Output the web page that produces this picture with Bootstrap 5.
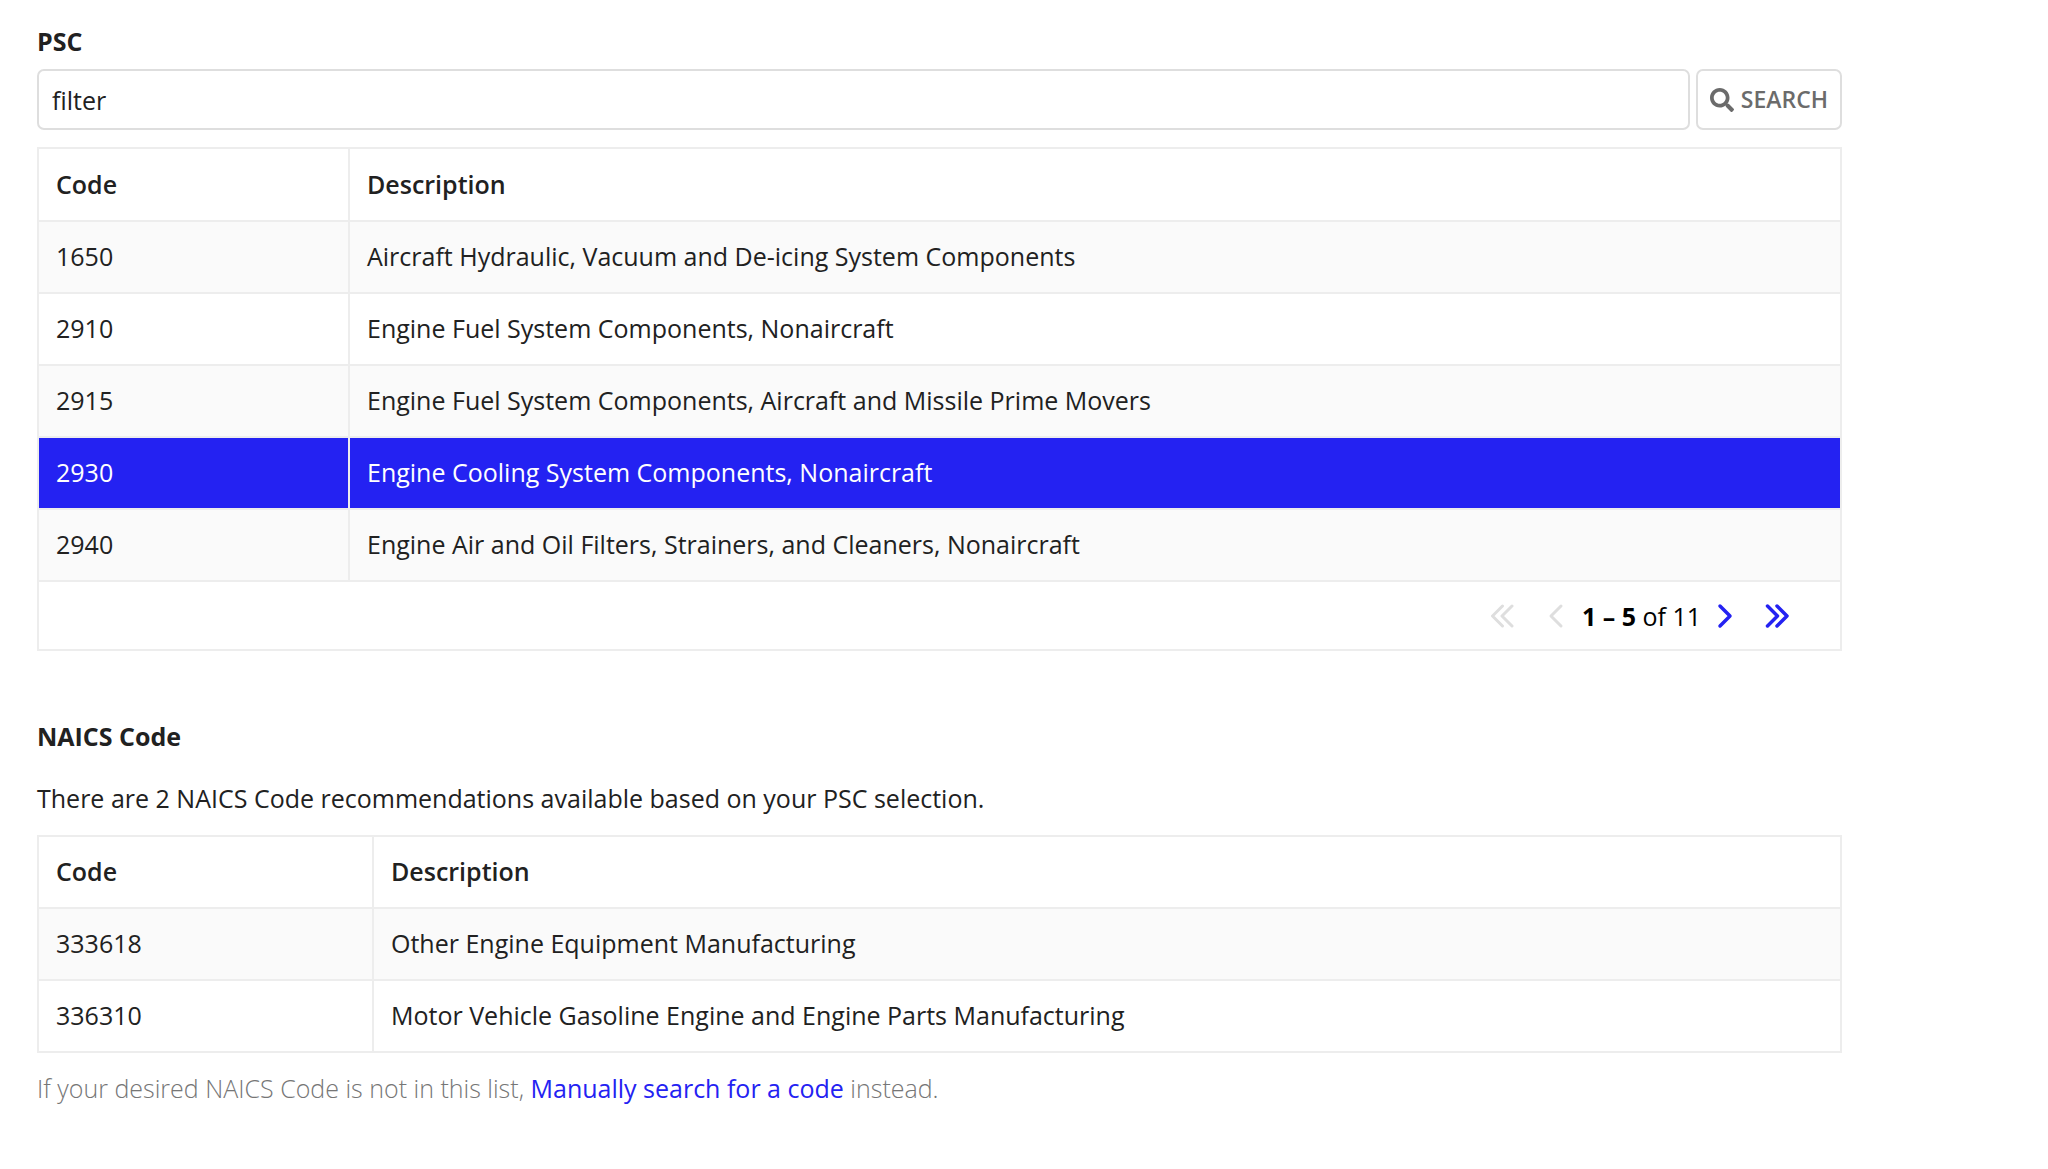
<!DOCTYPE html>
<html lang="en">
<head>
<meta charset="utf-8">
<meta name="viewport" content="width=device-width, initial-scale=1">
<title>PSC and NAICS Code</title>
<link rel="stylesheet" href="https://cdn.jsdelivr.net/npm/bootstrap@5.3.0/dist/css/bootstrap.min.css">
<style>
:root { --ink: #212121; --line: #ededed; --stripe: #fafafa; --accent: #2422f2; }
body { font-family: "Open Sans", sans-serif; font-size: 25px; line-height: 34px; color: var(--ink); background: #fff; }
.page-body { padding: 24px 206px 24px 37px; }
.field-title { font-size: 25px; line-height: 34px; font-weight: 700; }
.search-line { gap: 6px; margin: 11px 0 17px; }
.search-line .form-control { height: 61px; padding: 0 13px; font-size: 25px; color: var(--ink); border: 2px solid #dedede; border-radius: 7px; }
.search-line .btn { height: 61px; padding: 0 12px; gap: 7px; font-size: 23px; font-weight: 600; color: #6b6b6b; background: #fff; border: 2px solid #dedede; border-radius: 7px; }
.code-table { --bs-table-bg: #fff; --bs-table-striped-bg: var(--stripe); --bs-table-color: var(--ink); --bs-table-striped-color: var(--ink); border-collapse: collapse; table-layout: fixed; }
.code-table th, .code-table td { height: 72px; padding: 0 17px 2px; border: 2px solid var(--line); vertical-align: middle; }
.code-table th { font-weight: 600; }
.psc-table th { height: 73px; }
.psc-table .code-col { width: 311px; }
.naics-table .code-col { width: 335px; }
.code-table tr.picked > td { background: var(--accent); color: #fff; box-shadow: none; }
.code-table tfoot td { height: 69px; padding: 0 41px 0 17px; color: #000; }
.pager-btn { padding: 0 10px; border: 0; background: none; color: var(--accent); line-height: 0; }
.pager-btn:disabled { color: #dedede; }
.pager-first { margin-right: 14px; }
.pager-next { margin-right: 12px; }
.pager-range { padding: 0 6px 0 8px; }
.naics-block { margin-top: 68px; }
.naics-note { margin: 22px 0 14px; padding: 6px 0; }
.hint { color: #767676; font-weight: 300; margin-top: 18px; }
.hint a { color: var(--accent); font-weight: 400; text-decoration: none; }
</style>
</head>
<body>
<main class="page-body">
  <form onsubmit="return false">
    <label class="field-title d-block" for="psc">PSC</label>
    <div class="search-line d-flex">
      <input class="form-control flex-grow-1" id="psc" type="text" value="filter">
      <button class="btn d-flex align-items-center flex-shrink-0" type="submit">
        <svg width="24" height="24" viewBox="0 0 512 512" fill="currentColor" aria-hidden="true"><path d="M505 442.700 405.300 343c-4.500-4.500-10.600-7-17-7H372c27.600-35.300 44-79.700 44-128C416 93.100 322.900 0 208 0S0 93.100 0 208s93.100 208 208 208c48.300 0 92.700-16.400 128-44v16.300c0 6.400 2.500 12.500 7 17l99.700 99.700c9.400 9.400 24.600 9.400 33.900 0l28.300-28.300c9.400-9.400 9.400-24.600.1-34zM208 336c-70.700 0-128-57.200-128-128 0-70.700 57.200-128 128-128 70.700 0 128 57.200 128 128 0 70.700-57.200 128-128 128z"/></svg>
        SEARCH
      </button>
    </div>
  </form>

  <table class="table table-striped code-table psc-table mb-0">
    <colgroup><col class="code-col"><col></colgroup>
    <thead><tr><th scope="col">Code</th><th scope="col">Description</th></tr></thead>
    <tbody>
      <tr><td>1650</td><td>Aircraft Hydraulic, Vacuum and De-icing System Components</td></tr>
      <tr><td>2910</td><td>Engine Fuel System Components, Nonaircraft</td></tr>
      <tr><td>2915</td><td>Engine Fuel System Components, Aircraft and Missile Prime Movers</td></tr>
      <tr class="picked" aria-selected="true"><td>2930</td><td>Engine Cooling System Components, Nonaircraft</td></tr>
      <tr><td>2940</td><td>Engine Air and Oil Filters, Strainers, and Cleaners, Nonaircraft</td></tr>
    </tbody>
    <tfoot>
      <tr><td colspan="2">
        <div class="d-flex justify-content-end align-items-center">
          <button class="pager-btn pager-first" type="button" disabled aria-label="First page"><svg width="24" height="26" viewBox="0 0 24 26" fill="none" stroke="currentColor" stroke-width="3" stroke-linecap="round" stroke-linejoin="round"><path d="M12.500 3 2.500 13l10 10M22 3 12 13l10 10"/></svg></button>
          <button class="pager-btn" type="button" disabled aria-label="Previous page"><svg width="16" height="26" viewBox="0 0 16 26" fill="none" stroke="currentColor" stroke-width="3" stroke-linecap="round" stroke-linejoin="round"><path d="M13 3 3 13l10 10"/></svg></button>
          <span class="pager-range"><b>1 – 5</b> of 11</span>
          <button class="pager-btn pager-next" type="button" aria-label="Next page"><svg width="16" height="26" viewBox="0 0 16 26" fill="none" stroke="currentColor" stroke-width="3.500" stroke-linecap="round" stroke-linejoin="round"><path d="m3 3 10 10L3 23"/></svg></button>
          <button class="pager-btn" type="button" aria-label="Last page"><svg width="24" height="26" viewBox="0 0 24 26" fill="none" stroke="currentColor" stroke-width="3.500" stroke-linecap="round" stroke-linejoin="round"><path d="m2.500 3 10 10-10 10M12 3l10 10-10 10"/></svg></button>
        </div>
      </td></tr>
    </tfoot>
  </table>

  <section class="naics-block">
    <h2 class="field-title mb-0">NAICS Code</h2>
    <p class="naics-note">There are 2 NAICS Code recommendations available based on your PSC selection.</p>
    <table class="table table-striped code-table naics-table mb-0">
      <colgroup><col class="code-col"><col></colgroup>
      <thead><tr><th scope="col">Code</th><th scope="col">Description</th></tr></thead>
      <tbody>
        <tr><td>333618</td><td>Other Engine Equipment Manufacturing</td></tr>
        <tr><td>336310</td><td>Motor Vehicle Gasoline Engine and Engine Parts Manufacturing</td></tr>
      </tbody>
    </table>
    <p class="hint mb-0">If your desired NAICS Code is not in this list, <a href="#">Manually search for a code</a> instead.</p>
  </section>
</main>
<script src="https://cdn.jsdelivr.net/npm/bootstrap@5.3.0/dist/js/bootstrap.bundle.min.js"></script>
</body>
</html>
